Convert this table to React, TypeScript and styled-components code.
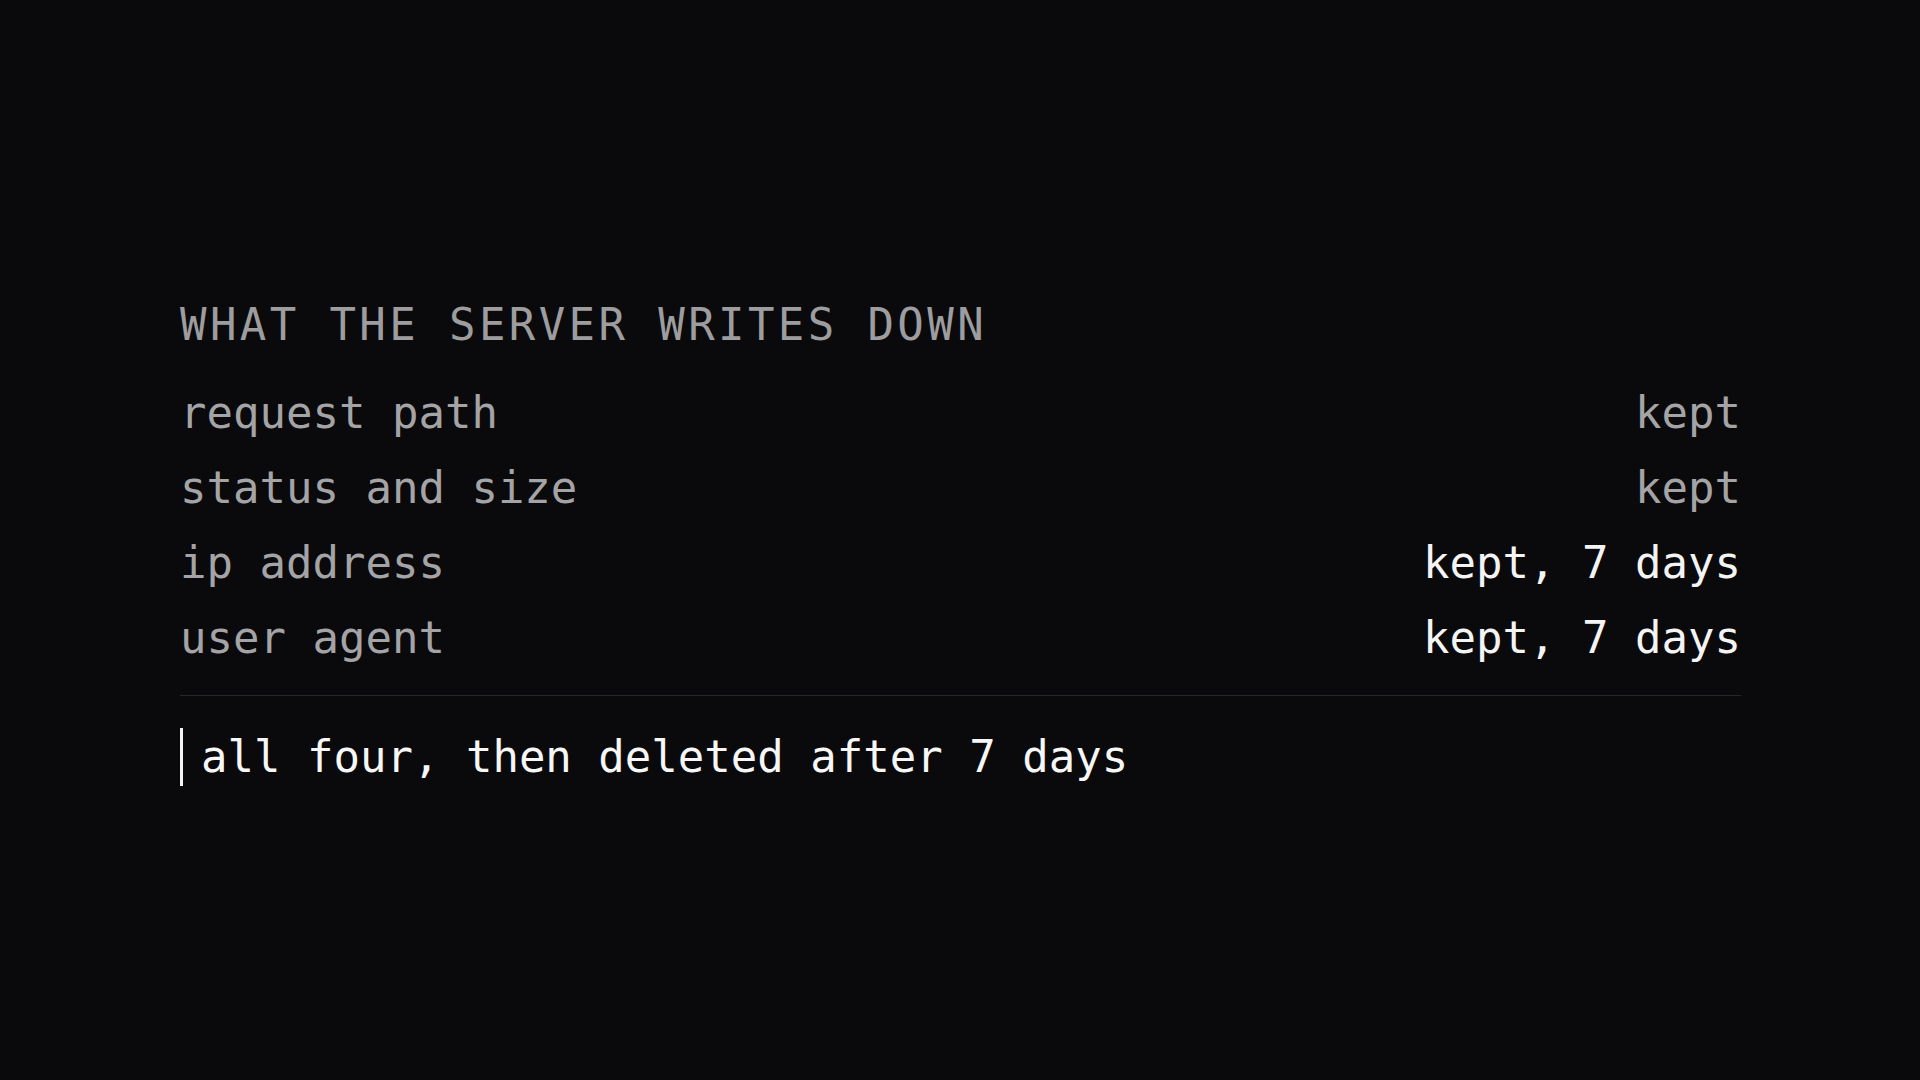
import styled, { createGlobalStyle } from 'styled-components';

const GlobalStyle = createGlobalStyle`
    html, body {
        margin: 0;
        padding: 0;
        background: #0a0a0c;
    }
    body {
        font-family: "DejaVu Sans Mono", "Liberation Mono", monospace;
    }
`;

interface ValueProps {
    strong?: boolean;
}

const Page = styled.main`
    width: 1920px;
    height: 1080px;
    box-sizing: border-box;
    padding: 303px 179px 0 180px;
    background: #0a0a0c;
`;

const Heading = styled.h2`
    margin: 0 0 28px;
    font-size: 44px;
    line-height: 44px;
    font-weight: 400;
    letter-spacing: 3.4px;
    color: #9d9d9f;
    text-transform: uppercase;
`;

const List = styled.div`
    display: flex;
    flex-direction: column;
    padding-bottom: 20px;
    border-bottom: 1px solid #26262a;
`;

const Row = styled.div`
    display: flex;
    justify-content: space-between;
    align-items: center;
    height: 75px;
    font-size: 44px;
    line-height: 75px;
`;

const Label = styled.span`
    color: #a4a4a6;
`;

const Value = styled.span<ValueProps>`
    color: ${(props) => (props.strong ? '#f4f4f5' : '#a4a4a6')};
`;

const Summary = styled.p`
    margin: 32px 0 0;
    padding-left: 18px;
    border-left: 3px solid #f4f4f5;
    font-size: 44px;
    line-height: 58px;
    color: #f7f7f8;
`;

const rows = [
    { label: 'request path', value: 'kept', strong: false },
    { label: 'status and size', value: 'kept', strong: false },
    { label: 'ip address', value: 'kept, 7 days', strong: true },
    { label: 'user agent', value: 'kept, 7 days', strong: true },
];

const App: React.FC = () => {
    return (
        <Page>
            <GlobalStyle />
            <Heading>What the server writes down</Heading>
            <List>
                {rows.map((row) => (
                    <Row key={row.label}>
                        <Label>{row.label}</Label>
                        <Value strong={row.strong}>{row.value}</Value>
                    </Row>
                ))}
            </List>
            <Summary>all four, then deleted after 7 days</Summary>
        </Page>
    );
};

export default App;
